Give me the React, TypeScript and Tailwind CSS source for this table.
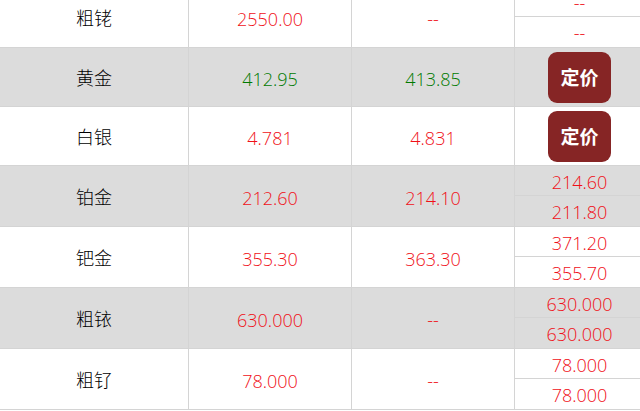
const RED = "text-[#f01018]"
const GREEN = "text-[#007a00]"

type Row = {
  name: string
  buy: string
  sell: string
  up?: boolean
  quote: "button" | [string, string]
}

const rows: Row[] = [
  { name: "粗铑", buy: "2550.00", sell: "--", quote: ["--", "--"] },
  { name: "黄金", buy: "412.95", sell: "413.85", up: true, quote: "button" },
  { name: "白银", buy: "4.781", sell: "4.831", quote: "button" },
  { name: "铂金", buy: "212.60", sell: "214.10", quote: ["214.60", "211.80"] },
  { name: "钯金", buy: "355.30", sell: "363.30", quote: ["371.20", "355.70"] },
  { name: "粗铱", buy: "630.000", sell: "--", quote: ["630.000", "630.000"] },
  { name: "粗钌", buy: "78.000", sell: "--", quote: ["78.000", "78.000"] },
]

export default function App() {
  return (
    <div className="w-[640px] h-[411px] overflow-hidden bg-white font-['Open_Sans','Noto_Sans_CJK_SC',sans-serif] font-light text-[18px]">
      <div className="-mt-[13px] w-[644px]">
        {rows.map((row, i) => {
          const split = row.quote !== "button"
          const color = row.up ? GREEN : RED
          return (
            <div
              key={row.name}
              className={`grid grid-cols-[189px_163px_163px_129px] border-b border-[#d4d4d4] ${
                split ? "h-[61px]" : "h-[59px]"
              } ${i % 2 === 1 ? "bg-[#dcdcdc]" : "bg-white"}`}
            >
              <div className="flex items-center justify-center border-r border-[#d4d4d4] text-black font-['Noto_Sans_CJK_SC',sans-serif] font-light">
                {row.name}
              </div>
              <div className={`flex items-center justify-center pt-[4px] border-r border-[#d4d4d4] ${color}`}>{row.buy}</div>
              <div className={`flex items-center justify-center pt-[4px] border-r border-[#d4d4d4] ${color}`}>{row.sell}</div>
              {row.quote === "button" ? (
                <div className="flex items-center pl-[33px]">
                  <button className="w-[63px] h-[51px] rounded-[9px] bg-[#862525] text-white font-bold text-[19px] font-['Noto_Sans_CJK_SC',sans-serif]">
                    定价
                  </button>
                </div>
              ) : (
                <div className="flex flex-col">
                  <div className={`h-[30px] flex items-center justify-center pt-[4px] border-b border-[#d4d4d4] ${RED}`}>
                    {row.quote[0]}
                  </div>
                  <div className={`h-[30px] flex items-center justify-center pt-[3px] ${RED}`}>{row.quote[1]}</div>
                </div>
              )}
            </div>
          )
        })}
      </div>
    </div>
  )
}
